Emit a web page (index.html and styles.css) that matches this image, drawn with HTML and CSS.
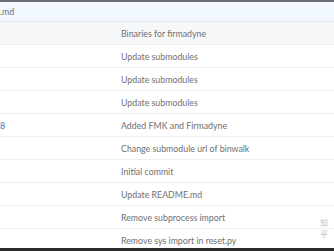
FILE: index.html
```html
<!DOCTYPE html>
<html>
<head>
<meta charset="utf-8">
<link rel="stylesheet" href="styles.css">
</head>
<body>
<div class="topbar"></div>
<div class="frame">
  <div class="header"><span class="name">.md</span></div>
  <div class="rows">
    <div class="row shaded"><span class="left"></span><span class="msg">Binaries for firmadyne</span></div>
    <div class="row"><span class="left"></span><span class="msg">Update submodules</span></div>
    <div class="row"><span class="left"></span><span class="msg">Update submodules</span></div>
    <div class="row"><span class="left"></span><span class="msg">Update submodules</span></div>
    <div class="row"><span class="left link">8</span><span class="msg">Added FMK and Firmadyne</span></div>
    <div class="row"><span class="left"></span><span class="msg">Change submodule url of binwalk</span></div>
    <div class="row"><span class="left"></span><span class="msg">Initial commit</span></div>
    <div class="row"><span class="left"></span><span class="msg">Update README.md</span></div>
    <div class="row"><span class="left"></span><span class="msg">Remove subprocess import</span></div>
    <div class="row"><span class="left"></span><span class="msg">Remove sys import in reset.py</span></div>
  </div>
  <div class="watermark"><span>知</span><span>乎</span></div>
</div>
<div class="bottombar"></div>
</body>
</html>
```
FILE: styles.css
```css
html, body {
  margin: 0;
  padding: 0;
  background: #fff;
}
body {
  width: 334px;
  height: 251px;
  overflow: hidden;
  font-family: "Lato", "Open Sans", sans-serif;
  font-size: 8.8px;
  color: #707070;
}
.topbar {
  height: 2px;
  background: #6b6f73;
}
.frame {
  position: relative;
  height: 246px;
  overflow: hidden;
}
.header {
  height: 20px;
  background: #f1f8ff;
  border-bottom: 1px solid #e4ecf4;
  box-sizing: border-box;
  display: flex;
  align-items: center;
}
.name {
  color: #707070;
}
.row {
  height: 23px;
  box-sizing: border-box;
  border-bottom: 1px solid #eceef0;
  display: grid;
  grid-template-columns: 121px 1fr;
  align-items: center;
}
.row.shaded {
  background: #f6f8fa;
}
.link {
  color: #3a78b8;
}
.msg {
  color: #707070;
}
.watermark {
  position: absolute;
  left: 320px;
  top: 216px;
  display: flex;
  flex-direction: column;
  gap: 1px;
  font-family: "Noto Sans CJK SC", sans-serif;
  font-size: 8px;
  line-height: 10px;
  color: #c4c4c4;
}
.bottombar {
  height: 3px;
  background: #2b2b2b;
}
```
